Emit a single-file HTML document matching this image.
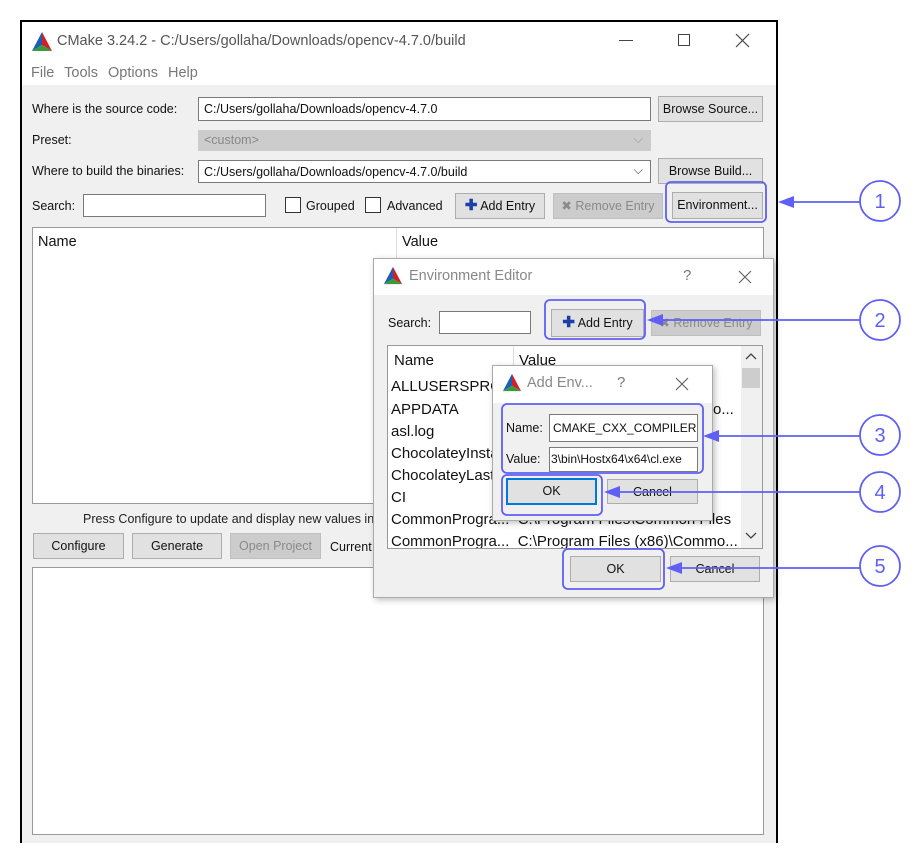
<!DOCTYPE html>
<html><head><meta charset="utf-8"><style>
*{box-sizing:border-box;margin:0;padding:0}
body{width:920px;height:862px;background:#fff;position:relative;overflow:hidden;font-family:"Liberation Sans",sans-serif;font-size:12.5px;color:#111}
.a{position:absolute;white-space:nowrap}
.in{position:absolute;background:#fff;border:1px solid #7a7a7a}
.btn{position:absolute;background:#e1e1e1;border:1px solid #adadad;text-align:center;line-height:24px;font-size:12.5px}
.dis{color:#8a8a8a;background:#cccccc;border-color:#bfbfbf}
.cb{position:absolute;width:16px;height:16px;border:1px solid #333;background:#fff}
.row{position:absolute;font-size:15px;color:#111}
</style></head><body>
<!-- main window -->
<div class="a" style="left:20px;top:20px;width:758px;height:823px;border:2px solid #000;border-bottom:none;background:#f0f0f0"></div>
<div class="a" style="left:22px;top:22px;width:754px;height:63px;background:#fff"></div>
<svg class="a" style="left:31px;top:31px" width="22" height="22" viewBox="0 0 22 22"><polygon points="11,1 1,20 11,14" fill="#1a5fb4"/><polygon points="11,1 21,20 11,14" fill="#d0202a"/><polygon points="1,20 21,20 11,14" fill="#3a9a3a"/></svg>
<div class="a" style="left:57px;top:33px;font-size:14.5px;color:#555">CMake 3.24.2 - C:/Users/gollaha/Downloads/opencv-4.7.0/build</div>
<div class="a" style="left:619px;top:40px;width:14px;height:1px;background:#444"></div>
<div class="a" style="left:678px;top:34px;width:12px;height:12px;border:1px solid #444"></div>
<svg class="a" style="left:735px;top:33px" width="15" height="15"><path d="M1 1L14 14M14 1L1 14" stroke="#444" stroke-width="1.2"/></svg>
<div class="a" style="left:31px;top:65px;font-size:14.5px;color:#777;word-spacing:6px">File Tools Options Help</div>

<div class="a" style="left:32px;top:102px">Where is the source code:</div>
<div class="in" style="left:198px;top:97px;width:453px;height:24px"><span class="a" style="left:5px;top:4px">C:/Users/gollaha/Downloads/opencv-4.7.0</span></div>
<div class="btn" style="left:658px;top:96px;width:105px;height:26px">Browse Source...</div>
<div class="a" style="left:32px;top:133px">Preset:</div>
<div class="a" style="left:198px;top:130px;width:453px;height:21px;background:#cccccc"><span class="a" style="left:6px;top:3px;color:#888">&lt;custom&gt;</span><span class="a" style="right:8px;top:2px;color:#999">⌵</span></div>
<div class="a" style="left:32px;top:164px">Where to build the binaries:</div>
<div class="in" style="left:198px;top:160px;width:453px;height:23px"><span class="a" style="left:5px;top:4px">C:/Users/gollaha/Downloads/opencv-4.7.0/build</span><span class="a" style="right:7px;top:2px;color:#444">⌵</span></div>
<div class="btn" style="left:658px;top:158px;width:105px;height:26px">Browse Build...</div>
<div class="a" style="left:32px;top:199px">Search:</div>
<div class="in" style="left:83px;top:194px;width:183px;height:23px"></div>
<div class="cb" style="left:285px;top:197px"></div><div class="a" style="left:306px;top:199px">Grouped</div>
<div class="cb" style="left:365px;top:197px"></div><div class="a" style="left:387px;top:199px">Advanced</div>
<div class="btn" style="left:455px;top:193px;width:90px;height:26px"><span style="color:#1a3fa8;font-weight:bold;font-size:15px">✚</span> Add Entry</div>
<div class="btn dis" style="left:553px;top:193px;width:110px;height:26px">✖ Remove Entry</div>
<div class="btn" style="left:672px;top:192px;width:91px;height:27px">Environment...</div>
<div class="in" style="left:32px;top:227px;width:732px;height:277px;border-color:#999"></div>
<div class="a" style="left:396px;top:228px;width:1px;height:30px;background:#ddd"></div>
<div class="a" style="left:38px;top:234px;font-size:14.5px">Name</div>
<div class="a" style="left:402px;top:234px;font-size:14.5px">Value</div>
<div class="a" style="left:83px;top:512px;color:#222">Press Configure to update and display new values in red, then press Generate to generate selected build files.</div>
<div class="btn" style="left:33px;top:533px;width:91px;height:26px">Configure</div>
<div class="btn" style="left:132px;top:533px;width:90px;height:26px">Generate</div>
<div class="btn dis" style="left:230px;top:533px;width:91px;height:26px">Open Project</div>
<div class="a" style="left:330px;top:540px">Current Generator: Visual Studio</div>
<div class="in" style="left:32px;top:567px;width:732px;height:268px;border-color:#999"></div>

<!-- Env editor -->
<div class="a" style="left:373px;top:258px;width:401px;height:340px;background:#f0f0f0;border:1px solid #aaa;box-shadow:2px 2px 6px rgba(0,0,0,.25)"></div>
<div class="a" style="left:374px;top:259px;width:399px;height:36px;background:#fff"></div>
<svg class="a" style="left:383px;top:266px" width="20" height="20" viewBox="0 0 22 22"><polygon points="11,1 1,20 11,14" fill="#1a5fb4"/><polygon points="11,1 21,20 11,14" fill="#d0202a"/><polygon points="1,20 21,20 11,14" fill="#3a9a3a"/></svg>
<div class="a" style="left:409px;top:268px;font-size:14.5px;color:#888">Environment Editor</div>
<div class="a" style="left:683px;top:267px;font-size:15px;color:#777">?</div>
<svg class="a" style="left:738px;top:270px" width="14" height="14"><path d="M1 1L13 13M13 1L1 13" stroke="#666" stroke-width="1.2"/></svg>
<div class="a" style="left:388px;top:316px">Search:</div>
<div class="in" style="left:439px;top:311px;width:92px;height:23px"></div>
<div class="btn" style="left:551px;top:309px;width:93px;height:28px;line-height:26px"><span style="color:#1a3fa8;font-weight:bold;font-size:15px">✚</span> Add Entry</div>
<div class="btn dis" style="left:651px;top:310px;width:110px;height:26px">✖ Remove Entry</div>
<div class="in" style="left:387px;top:345px;width:376px;height:204px;border-color:#999;overflow:hidden">
<div class="a" style="left:353px;top:0;width:21px;height:202px;background:#f0f0f0"></div>
<div class="a" style="left:354px;top:22px;width:18px;height:20px;background:#cdcdcd"></div>
<svg class="a" style="left:357px;top:6px" width="12" height="8"><path d="M1 7L6 2L11 7" fill="none" stroke="#444" stroke-width="1.3"/></svg>
<svg class="a" style="left:357px;top:186px" width="12" height="8"><path d="M1 1L6 6L11 1" fill="none" stroke="#444" stroke-width="1.3"/></svg>
<div class="a" style="left:125px;top:0;width:1px;height:30px;background:#ddd"></div>
<div class="row" style="left:6px;top:6px">Name</div><div class="row" style="left:131px;top:6px">Value</div>
<div class="row" style="left:3px;top:32px">ALLUSERSPROFILE</div>
<div class="row" style="left:3px;top:55px">APPDATA</div><div class="row" style="left:325px;top:55px">o...</div>
<div class="row" style="left:3px;top:77px">asl.log</div>
<div class="row" style="left:3px;top:99px">ChocolateyInstall</div>
<div class="row" style="left:3px;top:121px">ChocolateyLastPath</div>
<div class="row" style="left:3px;top:143px">CI</div>
<div class="row" style="left:3px;top:165px">CommonProgra...&nbsp; C:\Program Files\Common Files</div>
<div class="row" style="left:3px;top:187px">CommonProgra...&nbsp; C:\Program Files (x86)\Commo...</div>
</div>
<div class="btn" style="left:570px;top:556px;width:91px;height:26px">OK</div>
<div class="btn" style="left:670px;top:556px;width:90px;height:26px">Cancel</div>

<!-- Add env -->
<div class="a" style="left:492px;top:365px;width:221px;height:156px;background:#f0f0f0;border:1px solid #aaa;box-shadow:2px 2px 6px rgba(0,0,0,.25)"></div>
<div class="a" style="left:493px;top:366px;width:219px;height:37px;background:#fff"></div>
<svg class="a" style="left:502px;top:373px" width="20" height="20" viewBox="0 0 22 22"><polygon points="11,1 1,20 11,14" fill="#1a5fb4"/><polygon points="11,1 21,20 11,14" fill="#d0202a"/><polygon points="1,20 21,20 11,14" fill="#3a9a3a"/></svg>
<div class="a" style="left:527px;top:375px;font-size:14.5px;color:#888">Add Env...</div>
<div class="a" style="left:617px;top:374px;font-size:15px;color:#777">?</div>
<svg class="a" style="left:675px;top:377px" width="14" height="14"><path d="M1 1L13 13M13 1L1 13" stroke="#666" stroke-width="1.2"/></svg>
<div class="a" style="left:506px;top:421px">Name:</div>
<div class="in" style="left:549px;top:414px;width:149px;height:28px"><span class="a" style="left:3px;top:6px;font-size:12px">CMAKE_CXX_COMPILER</span></div>
<div class="a" style="left:506px;top:452px">Value:</div>
<div class="in" style="left:549px;top:447px;width:149px;height:25px"><span class="a" style="left:1px;top:4px;font-size:12px">3\bin\Hostx64\x64\cl.exe</span></div>
<div class="btn" style="left:506px;top:478px;width:91px;height:27px;border:2px solid #0078d7;line-height:23px">OK</div>
<div class="btn" style="left:607px;top:479px;width:91px;height:25px">Cancel</div>

<svg class="a" style="left:0;top:0" width="920" height="862">
<g fill="none" stroke="#5f5ff5" stroke-width="1.8">
<rect x="666" y="182" width="100" height="40" rx="5"/>
<rect x="545" y="300" width="100" height="39" rx="5"/>
<rect x="502" y="404" width="201" height="69" rx="5"/>
<rect x="502" y="475" width="100" height="40" rx="5"/>
<rect x="563" y="549" width="101" height="40" rx="5"/>
<circle cx="880" cy="201" r="20"/><circle cx="880" cy="320" r="20"/><circle cx="880" cy="435" r="20"/><circle cx="880" cy="492" r="20"/><circle cx="880" cy="566" r="20"/>
<line x1="860" y1="202" x2="790" y2="202"/><line x1="860" y1="320" x2="660" y2="320"/><line x1="860" y1="436" x2="716" y2="436"/><line x1="860" y1="492" x2="616" y2="492"/><line x1="860" y1="568" x2="680" y2="568"/>
</g>
<g fill="#5f5ff5">
<polygon points="778,202 794,196 794,208"/><polygon points="647,320 663,314 663,326"/><polygon points="703,436 719,430 719,442"/><polygon points="604,492 620,486 620,498"/><polygon points="666,568 682,562 682,574"/>
</g>
<g fill="#5f5ff5" font-family="Liberation Sans,sans-serif" font-size="20" text-anchor="middle">
<text x="880" y="208">1</text><text x="880" y="327">2</text><text x="880" y="442">3</text><text x="880" y="499">4</text><text x="880" y="573">5</text>
</g>
</svg>
</body></html>
